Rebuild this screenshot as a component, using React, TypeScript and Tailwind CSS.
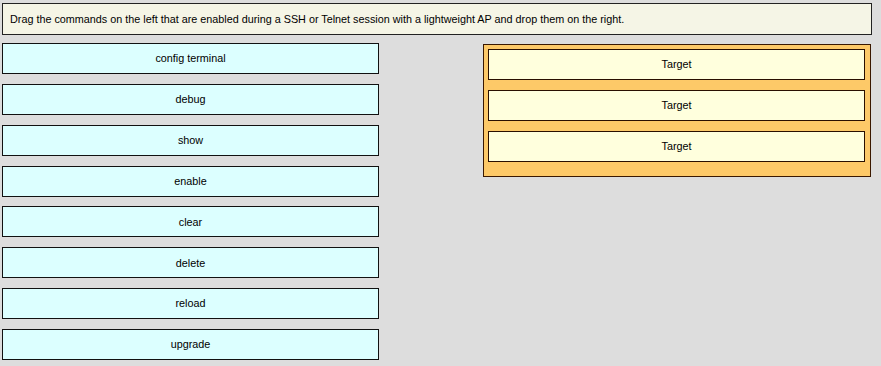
const commands = ["config terminal", "debug", "show", "enable", "clear", "delete", "reload", "upgrade"];
const targets = ["Target", "Target", "Target"];

export default function App() {
  return (
    <div
      className="w-[881px] h-[366px] overflow-hidden bg-[#dddddd] pl-[2px] pt-[3px] text-[10.8px] text-black"
      style={{ fontFamily: '"Liberation Sans", Arial, sans-serif' }}
    >
      <div className="w-[870px] h-[32px] border border-[#222] bg-[#f5f5e6] pl-[7px] flex items-center">
        Drag the commands on the left that are enabled during a SSH or Telnet session with a lightweight AP and drop them on the right.
      </div>

      <div className="flex mt-[8px]">
        <div className="w-[377px] flex flex-col gap-[9.85px]">
          {commands.map((c) => (
            <div
              key={c}
              className="h-[31px] border border-[#111] bg-[#dcffff] flex items-center justify-center"
            >
              {c}
            </div>
          ))}
        </div>

        <div className="ml-[104px] mt-[1px] w-[388px] h-[133px] border border-[#3a1800] bg-[#fdc968] pl-[4px] pr-[5px] pt-[4px] flex flex-col gap-[10px]">
          {targets.map((t, i) => (
            <div
              key={i}
              className="h-[31px] border border-[#2a0f00] bg-[#ffffdd] flex items-center justify-center"
            >
              {t}
            </div>
          ))}
        </div>
      </div>
    </div>
  );
}
